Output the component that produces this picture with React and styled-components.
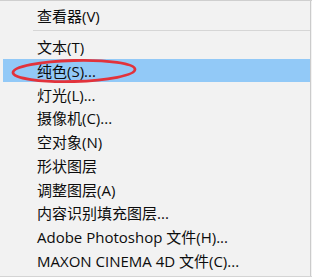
import React from "react";
import styled, { createGlobalStyle } from "styled-components";

const GlobalStyle = createGlobalStyle`
  html, body {
    margin: 0;
    padding: 0;
    background: #f2f2f2;
  }
`;

const Menu = styled.div`
  position: relative;
  width: 312px;
  height: 277px;
  box-sizing: border-box;
  background: #f2f2f2;
  border-top: 1px solid #cfcfcf;
  border-bottom: 1px solid #d4d4d4;
  padding: 3px 2px 0 3px;
  font-family: "Open Sans", "Noto Sans CJK SC", sans-serif;
  font-size: 15px;
  color: #0c0c0c;
  overflow: hidden;

  &::after {
    content: "";
    position: absolute;
    top: 0;
    bottom: 0;
    right: 1px;
    width: 1px;
    background: #cbcbcb;
  }
`;

const Item = styled.div`
  height: 23.75px;
  display: flex;
  align-items: center;
  padding-left: 34px;
  white-space: nowrap;
  background: ${(p) => (p.active ? "#92c9f7" : "transparent")};
`;

const Separator = styled.div`
  height: 1px;
  margin: 2px 0 4px 30px;
  background: #d6d6d6;
`;

const Circle = styled.svg`
  position: absolute;
  left: 0;
  top: 0;
  pointer-events: none;
`;

const items = [
  "文本(T)",
  "纯色(S)...",
  "灯光(L)...",
  "摄像机(C)...",
  "空对象(N)",
  "形状图层",
  "调整图层(A)",
  "内容识别填充图层...",
  "Adobe Photoshop 文件(H)...",
  "MAXON CINEMA 4D 文件(C)...",
];

export default function App() {
  return (
    <>
      <GlobalStyle />
      <Menu>
        <Item>查看器(V)</Item>
        <Separator />
        {items.map((label) => (
          <Item key={label} active={label.startsWith("纯色")}>
            {label}
          </Item>
        ))}
        <Circle width="312" height="277" viewBox="0 0 312 277">
          <ellipse
            cx="74"
            cy="70"
            rx="61"
            ry="10.5"
            fill="none"
            stroke="#e2323b"
            strokeWidth="2.8"
            transform="rotate(-1.5 74 70)"
          />
        </Circle>
      </Menu>
    </>
  );
}
